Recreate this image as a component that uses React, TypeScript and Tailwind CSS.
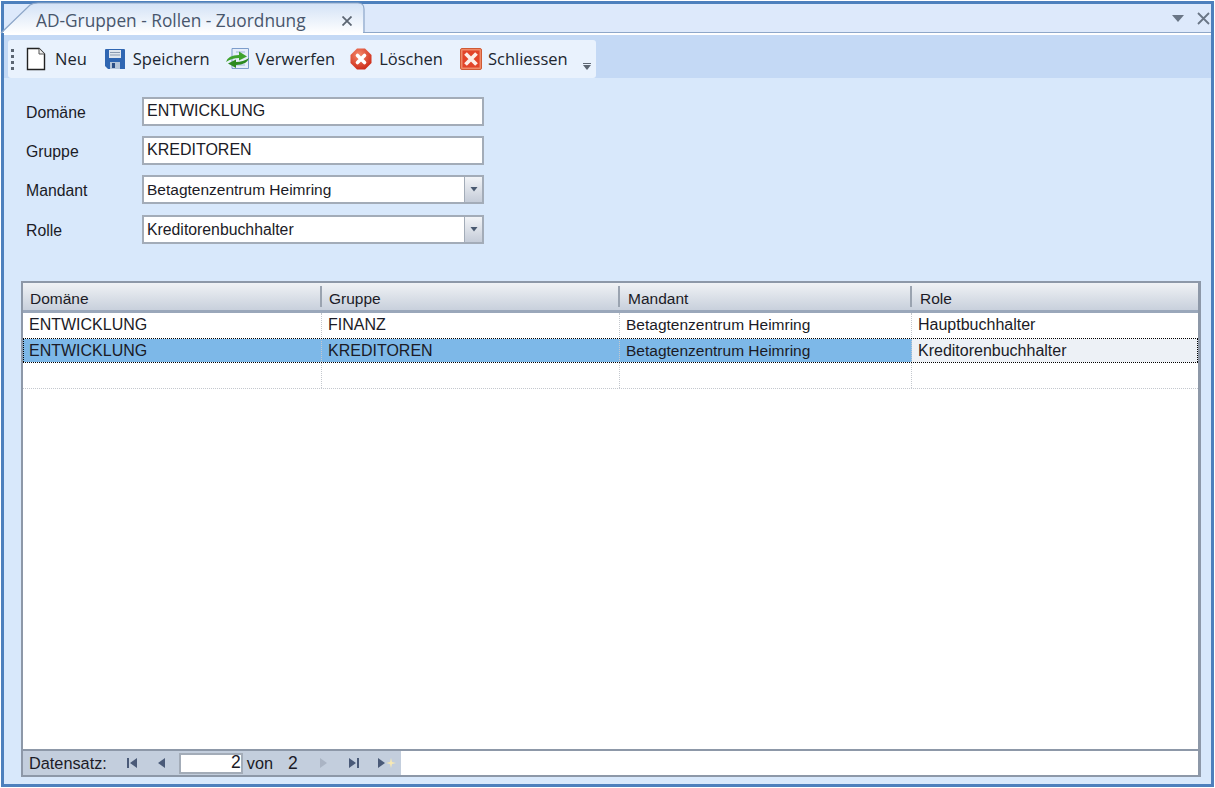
import type { ReactNode } from 'react'

const rows = [
  ['ENTWICKLUNG', 'FINANZ', 'Betagtenzentrum Heimring', 'Hauptbuchhalter'],
  ['ENTWICKLUNG', 'KREDITOREN', 'Betagtenzentrum Heimring', 'Kreditorenbuchhalter'],
]
const colClass = ['w-[299px]', 'w-[298px]', 'w-[292px]', 'flex-1']

function TabShape() {
  return (
    <svg className="absolute inset-0" width="366" height="34" viewBox="0 0 366 34">
      <defs>
        <linearGradient id="tabFill" x1="0" y1="0" x2="0" y2="1">
          <stop offset="0" stopColor="#d3e2f6" />
          <stop offset="1" stopColor="#ffffff" />
        </linearGradient>
      </defs>
      <path d="M2 33 L30 5 Q33 3 38 3 L358 3 Q363 3 363 9 L363 34 Z" fill="url(#tabFill)" />
      <path d="M1 33 L30 5 Q33 3 38 3 L358 3 Q364 3 364 9 L364 33" fill="none" stroke="#8ea7c8" strokeWidth="1.2" />
    </svg>
  )
}

function NewIcon() {
  return (
    <svg width="22" height="24" viewBox="0 0 22 24">
      <path d="M2.5 1.5 H14 L19.5 7 V22.5 H2.5 Z" fill="#fff" stroke="#222" strokeWidth="1.4" />
      <path d="M14 1.5 V7 H19.5" fill="#eee" stroke="#555" strokeWidth="1" />
    </svg>
  )
}

function SaveIcon() {
  return (
    <svg width="22" height="22" viewBox="0 0 22 22">
      <path d="M1 2 Q1 1 2 1 H20 Q21 1 21 2 V21 H4 L1 18 Z" fill="#2f66b2" />
      <rect x="5" y="2" width="12" height="8" fill="#dfe6ee" />
      <path d="M6 4.5 H16 M6 7 H16" stroke="#8b9bb0" strokeWidth="1" />
      <rect x="6" y="14" width="10" height="7" fill="#b6c6da" />
      <rect x="8" y="15" width="3" height="5" fill="#2c4f86" />
    </svg>
  )
}

function DiscardIcon() {
  return (
    <svg width="26" height="24" viewBox="0 0 26 24">
      <path d="M7 1.5 H23.5 V21.5 H7 Z" fill="#e6eef9" stroke="#7d9dcb" strokeWidth="1" />
      <path d="M11 5 H20 M11 18 H20" stroke="#9db7da" strokeWidth="1.2" />
      <path d="M1 15 Q3 8 14 8 V4.5 L22 9.5 L14 13.5 V11 Q7 11 1 15 Z" fill="#3ea32c" />
      <path d="M24 11 Q22 18 11 18 V21 L3 16.5 L11 12.5 V15 Q18 15 24 11 Z" fill="#2c8a20" />
    </svg>
  )
}

function DeleteIcon() {
  return (
    <svg width="22" height="22" viewBox="0 0 22 22">
      <defs>
        <radialGradient id="delFill" cx="0.4" cy="0.3" r="0.8">
          <stop offset="0" stopColor="#f58a6b" />
          <stop offset="1" stopColor="#c9200f" />
        </radialGradient>
      </defs>
      <path d="M7 0.5 H15 L21.5 7 V15 L15 21.5 H7 L0.5 15 V7 Z" fill="url(#delFill)" />
      <path d="M7.5 7.5 L14.5 14.5 M14.5 7.5 L7.5 14.5" stroke="#fff" strokeWidth="3.6" strokeLinecap="round" />
    </svg>
  )
}

function CloseIcon() {
  return (
    <svg width="22" height="22" viewBox="0 0 22 22">
      <rect x="0.5" y="0.5" width="21" height="21" rx="1.5" fill="#f08a68" stroke="#cf5a35" />
      <rect x="2.5" y="2.5" width="17" height="17" fill="#e2452a" />
      <path d="M5.5 5.5 L16.5 16.5 M16.5 5.5 L5.5 16.5" stroke="#fdeee8" strokeWidth="3.8" />
    </svg>
  )
}

function ToolButton({ icon, label, className }: { icon: ReactNode; label: string; className: string }) {
  return (
    <div className={`flex items-center ${className}`}>
      {icon}
      <span className="pt-[1px]">{label}</span>
    </div>
  )
}

function TextField({ label, value, className }: { label: string; value: string; className: string }) {
  return (
    <div className={`flex items-center ${className}`}>
      <div className="w-[138px] pl-[22px] pt-[3px] text-[15.8px]">{label}</div>
      <div className="flex h-[29px] w-[342px] items-center border-2 border-[#a3acb8] bg-white pl-[3px] pb-[1px] text-[16px]">{value}</div>
    </div>
  )
}

function ComboField({ label, value, className }: { label: string; value: string; className: string }) {
  return (
    <div className={`flex items-center ${className}`}>
      <div className="w-[138px] pl-[22px] pt-[3px] text-[15.8px]">{label}</div>
      <div className="flex h-[29px] w-[342px] items-center border-2 border-[#a3acb8] bg-white pl-[3px]">
        <span className={`flex-1 ${value.startsWith('Betagten') ? 'text-[15.5px]' : 'text-[15.8px]'}`}>{value}</span>
        <div className="flex h-[25px] w-[18px] items-center justify-center border-l border-[#a3acb8] bg-gradient-to-b from-[#f2f4f7] to-[#c5ccd8]">
          <svg width="8" height="5" viewBox="0 0 8 5"><path d="M0.5 0 H7.5 L4 4.5 Z" fill="#4a5a70" /></svg>
        </div>
      </div>
    </div>
  )
}

function NavGlyph({ d, color = '#4a5a78' }: { d: string; color?: string }) {
  return (
    <svg width="14" height="12" viewBox="0 0 14 12"><path d={d} fill={color} /></svg>
  )
}

export default function App() {
  return (
    <div className="h-[788px] w-[1215px] overflow-hidden bg-white p-px font-['Liberation_Sans',sans-serif] text-[16px] text-[#1b1b26]">
      <div className="flex h-[786px] flex-col border-[3px] border-[#4d80bd] bg-[#d8e8fb]">
        {/* tab strip */}
        <div className="flex h-[29px] shrink-0 items-center justify-between border-b-[1.5px] border-[#8ea7c8] bg-[#dde9fb]">
          <div className="relative z-10 h-[29px] w-[361px] self-start">
            <div className="absolute -left-[4px] -top-[4px]"><TabShape /></div>
            <div className="relative flex h-[33px] items-center pl-[32px] pt-[1px] font-['Open_Sans',sans-serif] text-[17.3px] text-[#48566c]">
              <span>AD-Gruppen - Rollen - Zuordnung</span>
              <svg className="ml-[36px]" width="10" height="10" viewBox="0 0 10 10"><path d="M0.5 0.5 L9.5 9.5 M9.5 0.5 L0.5 9.5" stroke="#5c6672" strokeWidth="1.8" /></svg>
            </div>
          </div>
          <div className="flex items-center gap-[13px] pr-[1px]">
            <svg width="12" height="7" viewBox="0 0 12 7"><path d="M0 0 H12 L6 7 Z" fill="#6a7686" /></svg>
            <svg width="13" height="13" viewBox="0 0 13 13"><path d="M1 1 L12 12 M12 1 L1 12" stroke="#6a7686" strokeWidth="1.8" /></svg>
          </div>
        </div>

        {/* toolbar */}
        <div className="flex h-[45px] shrink-0 items-end border-t-2 border-white bg-[#c4d9f5] pl-[4px]">
          <div className="flex h-[38px] w-[588px] items-center rounded-[3px] bg-[#e9f2fd] font-['Open_Sans',sans-serif] text-[16.5px] text-[#20262f]">
            <div className="ml-[3px] mr-[3px] flex flex-col gap-[3px]">
              <span className="h-[3px] w-[3px] bg-[#5c6672]" />
              <span className="h-[3px] w-[3px] bg-[#5c6672]" />
              <span className="h-[3px] w-[3px] bg-[#5c6672]" />
              <span className="h-[3px] w-[3px] bg-[#5c6672]" />
            </div>
            <ToolButton icon={<NewIcon />} label="Neu" className="ml-[8px] gap-[8px]" />
            <ToolButton icon={<SaveIcon />} label="Speichern" className="ml-[17px] gap-[7px]" />
            <ToolButton icon={<DiscardIcon />} label="Verwerfen" className="ml-[15px] gap-[5px]" />
            <ToolButton icon={<DeleteIcon />} label="Löschen" className="ml-[15px] gap-[7px]" />
            <ToolButton icon={<CloseIcon />} label="Schliessen" className="ml-[17px] gap-[6px]" />
            <div className="ml-[15px] mt-[15px] flex flex-col items-center gap-[1px]">
              <span className="h-[1px] w-[8px] bg-[#5c6672]" />
              <svg width="8" height="5" viewBox="0 0 8 5"><path d="M0 0 H8 L4 5 Z" fill="#5c6672" /></svg>
            </div>
          </div>
        </div>

        {/* form */}
        <div className="shrink-0 pt-[19px]">
          <TextField label="Domäne" value="ENTWICKLUNG" className="" />
          <TextField label="Gruppe" value="KREDITOREN" className="mt-[10px]" />
          <ComboField label="Mandant" value="Betagtenzentrum Heimring" className="mt-[10px]" />
          <ComboField label="Rolle" value="Kreditorenbuchhalter" className="mt-[11px]" />
        </div>

        {/* grid */}
        <div className="ml-[17px] mr-[10px] mt-[37px] flex h-[496px] flex-col border-2 border-r-[3px] border-[#8d98a8] bg-white">
          <div className="flex h-[30px] shrink-0 border-b-[3px] border-[#9aa7ba] bg-gradient-to-b from-[#f0f2f5] to-[#c8d0dc] text-[15.5px]">
            {['Domäne', 'Gruppe', 'Mandant', 'Role'].map((title, i) => (
              <div key={title} className={`${colClass[i]} flex items-center ${i < 2 ? 'pl-[7px]' : 'pl-[8px]'}`}>
                <span className={i < 3 ? 'flex h-[21px] w-full items-center border-r-2 border-[#9aa3b0] pt-[5px]' : 'pt-[5px]'}>{title}</span>
              </div>
            ))}
          </div>
          {rows.map((row, r) => {
            const selected = r === 1
            return (
              <div key={r} className={`flex h-[25px] shrink-0 ${selected ? 'border-y border-dotted border-black' : 'pb-[1px]'}`}>
                {row.map((cell, i) => (
                  <div
                    key={i}
                    className={`${colClass[i]} flex items-center ${i === 0 && selected ? 'border-l border-dotted border-l-black pl-[5px]' : 'pl-[6px]'} ${i === 2 ? 'text-[15.5px]' : ''} ${i < 3 ? 'border-r border-dotted border-r-[#c4c8ce]' : ''} ${selected ? (i < 3 ? 'bg-[#7db8e8]' : 'border-r border-dotted border-r-black bg-[#edf1f6]') : ''}`}
                  >
                    {cell}
                  </div>
                ))}
              </div>
            )
          })}
          <div className="flex h-[26px] shrink-0 border-b border-dotted border-[#c4c8ce]">
            {colClass.map((col, i) => (
              <div key={i} className={`${col} ${i < 3 ? 'border-r border-dotted border-[#c4c8ce]' : ''}`} />
            ))}
          </div>
          <div className="flex-1" />
          {/* record navigator */}
          <div className="flex h-[26px] shrink-0 border-t-2 border-[#8d98a8]">
            <div className="flex w-[378px] items-center bg-[#c3cedd] pl-[6px] text-[16.3px]">
              <span>Datensatz:</span>
              <div className="ml-[18px] flex items-center gap-[16px]">
                <NavGlyph d="M2 1 H4 V11 H2 Z M12 1 V11 L5 6 Z" />
                <NavGlyph d="M10 1 V11 L3 6 Z" />
              </div>
              <div className="ml-[10px] flex h-[21px] w-[64px] items-center justify-end border-2 border-[#a3acb8] bg-white text-[17.5px] leading-none">2</div>
              <span className="ml-[4px]">von</span>
              <span className="ml-[15px] text-[17.5px]">2</span>
              <div className="ml-[18px] flex items-center gap-[17px]">
                <NavGlyph d="M4 1 V11 L11 6 Z" color="#aab4c4" />
                <NavGlyph d="M2 1 V11 L9 6 Z M10 1 H12 V11 H10 Z" />
                <svg className="-ml-[1px]" width="20" height="12" viewBox="0 0 20 12">
                  <path d="M1 1 V11 L8 6 Z" fill="#4a5a78" />
                  <path d="M14 1 L15 5 L19 6 L15 7 L14 11 L13 7 L9 6 L13 5 Z" fill="#f7e9b4" />
                </svg>
              </div>
            </div>
            <div className="flex-1 bg-white" />
          </div>
        </div>
      </div>
    </div>
  )
}
